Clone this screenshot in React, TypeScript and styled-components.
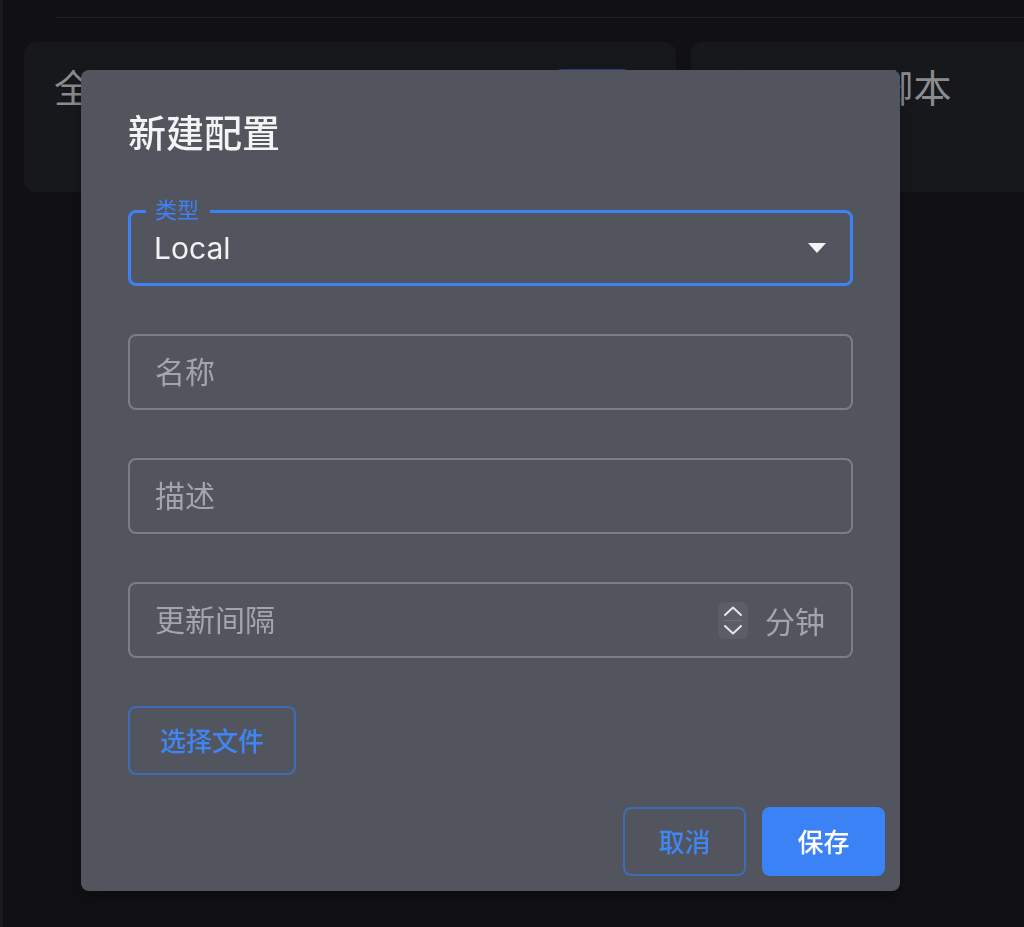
import styled, { createGlobalStyle } from "styled-components";

const BLUE = "#3b82f6";
const MODAL_BG = "#52555e";
const MUTED = "#a3a5ab";

const GlobalStyle = createGlobalStyle`
  html, body {
    margin: 0;
    padding: 0;
    background: #111115;
  }
  body {
    font-family: Inter, "Noto Sans CJK SC", sans-serif;
  }
  * {
    box-sizing: border-box;
  }
`;

const ArrowDown = () => (
  <svg width="18" height="10" viewBox="0 0 18 10">
    <path d="M0 0 H18 L9 10 Z" fill="#f2f2f2" />
  </svg>
);

const SpinIcon = () => (
  <svg width="30" height="37" viewBox="0 0 30 37" fill="none">
    <path d="M6 18.5 H24" stroke="rgba(255,255,255,0.12)" strokeWidth="1" />
    <path
      d="M7 13 L15 5.5 L23 13"
      stroke="#e4e5e8"
      strokeWidth="2"
      strokeLinecap="round"
      strokeLinejoin="round"
    />
    <path
      d="M7 24 L15 31.5 L23 24"
      stroke="#e4e5e8"
      strokeWidth="2"
      strokeLinecap="round"
      strokeLinejoin="round"
    />
  </svg>
);

const App = () => {
  return (
    <>
      <GlobalStyle />
      <Page>
        <TopRule />
        <CardRow>
          <Card>
            <CardTitle>全局扩展配置</CardTitle>
            <Chip />
          </Card>
          <Card>
            <CardTitle>全局扩展脚本</CardTitle>
          </Card>
        </CardRow>
      </Page>

      <Dialog>
        <Body>
          <Title>新建配置</Title>
          <Fields>
            <Field $focused>
              <FloatLabel>类型</FloatLabel>
              <SelectValue>Local</SelectValue>
              <ArrowDown />
            </Field>
            <Field>
              <Input placeholder="名称" />
            </Field>
            <Field>
              <Input placeholder="描述" />
            </Field>
            <Field>
              <Input placeholder="更新间隔" />
              <Spinner>
                <SpinIcon />
              </Spinner>
              <Unit>分钟</Unit>
            </Field>
            <FileButton>选择文件</FileButton>
          </Fields>
        </Body>
        <Actions>
          <ActionButton>取消</ActionButton>
          <ActionButton $primary>保存</ActionButton>
        </Actions>
      </Dialog>
    </>
  );
};

const Page = styled.div`
  min-height: 927px;
  border-left: 3px solid #1a1b1f;
  overflow: hidden;
`;

const TopRule = styled.div`
  height: 18px;
  margin-left: 52px;
  border-bottom: 1px solid #1e1f24;
`;

const CardRow = styled.div`
  display: grid;
  grid-template-columns: 652px 652px;
  gap: 15px;
  margin-top: 24px;
  padding-left: 21px;
`;

const Card = styled.div`
  height: 150px;
  background: #17181c;
  border-radius: 12px;
  padding: 24px 45px 0 30px;
  display: flex;
  justify-content: space-between;
  align-items: flex-start;
`;

const CardTitle = styled.div`
  font-size: 38px;
  line-height: 1.2;
  letter-spacing: 0.5px;
  color: #8b8c90;
  white-space: nowrap;
`;

const Chip = styled.div`
  width: 77px;
  height: 40px;
  margin-top: 3px;
  background: #24447a;
  border-radius: 8px;
`;

const Dialog = styled.div`
  position: fixed;
  top: 70px;
  left: 81px;
  width: 819px;
  background: ${MODAL_BG};
  border-radius: 8px;
  box-shadow: 0 6px 16px rgba(0, 0, 0, 0.25);
`;

const Body = styled.div`
  padding: 41px 47px 0 47px;
`;

const Title = styled.h2`
  margin: 0 0 54px;
  font-size: 38px;
  line-height: 45px;
  font-weight: 500;
  color: #f4f4f5;
`;

const Fields = styled.div`
  display: flex;
  flex-direction: column;
  gap: 48px;
`;

const Field = styled.div<{ $focused?: boolean }>`
  position: relative;
  height: 76px;
  display: flex;
  align-items: center;
  border: ${(p) => (p.$focused ? `3px solid ${BLUE}` : "2px solid #7b7e86")};
  border-radius: 8px;
  padding: ${(p) => (p.$focused ? "0 24px 0 23px" : "0 26px 0 25px")};
`;

const FloatLabel = styled.span`
  position: absolute;
  top: -14px;
  left: 15px;
  padding: 0 11px 0 9px;
  background: ${MODAL_BG};
  color: ${BLUE};
  font-size: 22px;
  line-height: 22px;
`;

const SelectValue = styled.div`
  flex: 1;
  font-size: 30px;
  color: #f2f2f2;
`;

const Input = styled.input`
  flex: 1;
  min-width: 0;
  padding: 0;
  border: 0;
  outline: 0;
  background: transparent;
  font: inherit;
  font-size: 30px;
  color: #f2f2f2;

  &::placeholder {
    color: ${MUTED};
  }
`;

const Spinner = styled.div`
  width: 30px;
  height: 37px;
  border-radius: 6px;
  background: #5b5e67;
  display: flex;
`;

const Unit = styled.span`
  margin-left: 17px;
  font-size: 30px;
  color: ${MUTED};
`;

const FileButton = styled.button`
  align-self: flex-start;
  height: 69px;
  padding: 0 30px 2px;
  border: 2px solid #3e6cb6;
  border-radius: 8px;
  background: transparent;
  color: #3f86f5;
  font-family: inherit;
  font-size: 26px;
  font-weight: 500;
`;

const Actions = styled.div`
  display: flex;
  justify-content: flex-end;
  gap: 16px;
  padding: 32px 15px 15px;
`;

const ActionButton = styled.button<{ $primary?: boolean }>`
  width: 123px;
  height: 69px;
  padding: 0 0 3px;
  border-radius: 8px;
  font-family: inherit;
  font-size: 26px;
  font-weight: 500;
  border: ${(p) => (p.$primary ? "0" : "2px solid #3e6cb6")};
  background: ${(p) => (p.$primary ? BLUE : "transparent")};
  color: ${(p) => (p.$primary ? "#ffffff" : "#3f86f5")};
`;

export default App;
